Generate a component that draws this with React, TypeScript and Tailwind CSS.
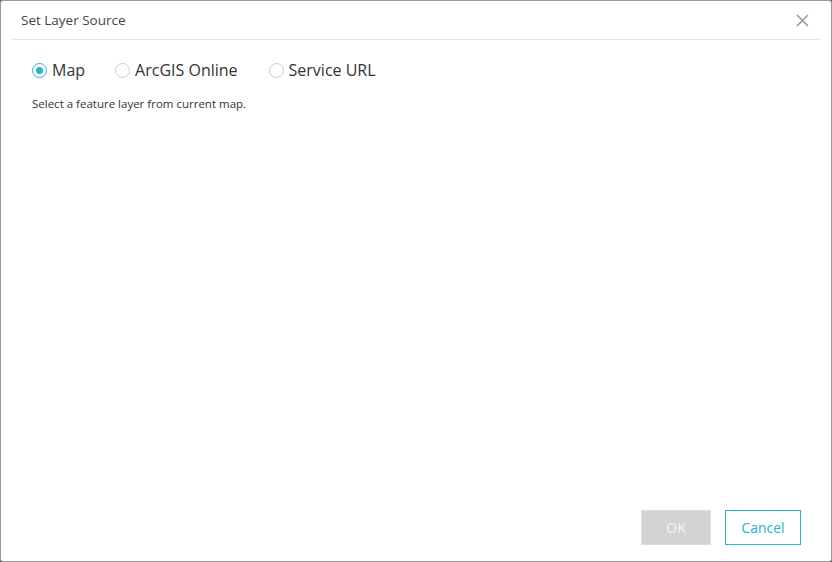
const font = { fontFamily: "'Open Sans', 'Liberation Sans', sans-serif" };

function Radio({ label, checked }: { label: string; checked?: boolean }) {
  return (
    <label className="flex items-center gap-[5px] text-[16px] leading-[20px] text-[#333]">
      <span
        className={
          "flex h-[15px] w-[15px] items-center justify-center rounded-full border " +
          (checked ? "border-[#24b5cc]" : "border-[#ccc]")
        }
      >
        {checked && <span className="h-[7px] w-[7px] rounded-full bg-[#24b5cc]" />}
      </span>
      {label}
    </label>
  );
}

export default function App() {
  return (
    <div className="h-[562px] w-[832px] bg-[#56676c]" style={font}>
      <div className="flex h-full w-full flex-col rounded-[3px] border border-[#9a9a9a] bg-white">
        <div className="mx-[10px] flex h-[39px] items-center justify-between border-b border-[#d8e9ef] pl-[10px] pr-[12px]">
          <span className="pt-[1px] text-[13.5px] text-[#444]">Set Layer Source</span>
          <svg width="13" height="13" viewBox="0 0 13 13" className="text-[#999]">
            <path d="M1 1L12 12M12 1L1 12" stroke="currentColor" strokeWidth="1.6" />
          </svg>
        </div>
        <div className="flex-1 pl-[31px] pr-[30px] pt-[20px]">
          <div className="flex items-center">
            <Radio label="Map" checked />
            <div className="ml-[30px]">
              <Radio label="ArcGIS Online" />
            </div>
            <div className="ml-[31px]">
              <Radio label="Service URL" />
            </div>
          </div>
          <p className="mt-[16px] text-[11.5px] leading-[16px] text-[#333]">
            Select a feature layer from current map.
          </p>
        </div>
        <div className="flex justify-end gap-[14px] pb-[16px] pr-[30px]">
          <button className="h-[35px] w-[70px] border border-[#dcdcdc] bg-[#d3d3d3] text-[14px] text-[#f4f4f4]">
            OK
          </button>
          <button className="h-[35px] w-[76px] border border-[#24b5cc] bg-white text-[14px] text-[#24b5cc]">
            Cancel
          </button>
        </div>
      </div>
    </div>
  );
}
